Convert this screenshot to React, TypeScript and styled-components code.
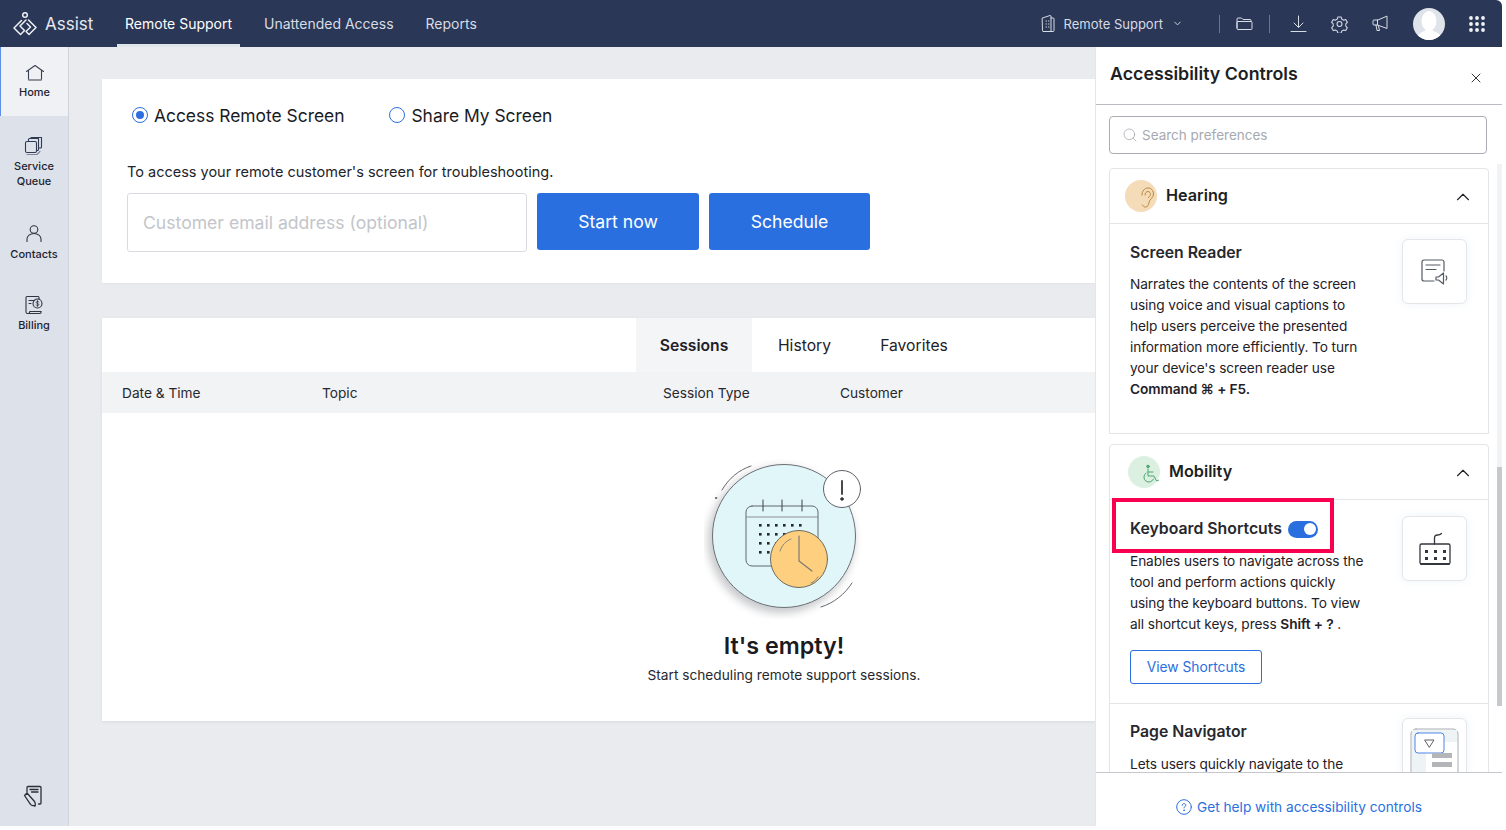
import { createGlobalStyle } from 'styled-components'
import styled from 'styled-components'
import { ChevronDown, ChevronUp, Search, X } from 'lucide-react'

const GlobalStyle = createGlobalStyle`
  html, body { margin: 0; padding: 0; height: 100%; background: #fff; }
  body { font-family: Inter, "Open Sans", "Liberation Sans", sans-serif; overflow: hidden; color: #1b1b1f; }
  * { box-sizing: border-box; }
`

const Page = styled.div`
  width: 1506px;
  height: 830px;
  display: flex;
  flex-direction: column;
  overflow: hidden;
`

// ---- top bar ----

const TopBar = styled.header`
  width: 1502px;
  height: 47px;
  flex: none;
  background: #2a3756;
  border-top-right-radius: 6px;
  display: flex;
  align-items: center;
  padding: 0 17px 0 12px;
  color: #e6e8ee;
`

const Logo = styled.div`
  display: flex;
  align-items: center;
  gap: 7px;
  width: 105px;
  font-size: 17px;
  color: #e4e7ed;
`

const TopNav = styled.nav`
  display: flex;
  height: 100%;
  gap: 16px;
`

const TopLink = styled.a<{ $active?: boolean }>`
  height: 100%;
  padding: 3px 8px 0;
  display: flex;
  align-items: center;
  font-size: 14px;
  color: ${({ $active }) => ($active ? '#fff' : '#d8dce5')};
  border-bottom: 3px solid ${({ $active }) => ($active ? '#dfe3ea' : 'transparent')};
`

const TopRight = styled.div`
  margin-left: auto;
  display: flex;
  align-items: center;
  color: #d8dce5;
`

const ProductPick = styled.div`
  display: flex;
  align-items: center;
  font-size: 13px;
  gap: 9px;
  margin-right: 20px;
`

const Divider = styled.span`
  width: 1px;
  height: 18px;
  background: #6b7590;
  margin: 0 16px;
`

const ToolSlot = styled.span<{ $left?: number }>`
  display: flex;
  margin-left: ${({ $left }) => $left ?? 0}px;
`

const Avatar = styled.div`
  width: 32px;
  height: 32px;
  border-radius: 50%;
  overflow: hidden;
  margin: 0 24px;
`

// ---- page body ----

const Body = styled.div`
  flex: 1;
  display: flex;
  min-height: 0;
  margin-bottom: 4px;
`

const Sidebar = styled.aside`
  width: 69px;
  flex: none;
  background: #dde1ea;
  border-right: 1px solid #cfd3da;
  display: flex;
  flex-direction: column;
`

const SideItem = styled.a<{ $active?: boolean; $height: number; $top: number }>`
  height: ${({ $height }) => $height}px;
  display: flex;
  flex-direction: column;
  align-items: center;
  padding-top: ${({ $top }) => $top}px;
  gap: 3px;
  font-size: 11px;
  line-height: 15px;
  font-weight: 500;
  text-align: center;
  color: #1d2430;
  background: ${({ $active }) => ($active ? '#eff1f4' : 'transparent')};
  border-left: ${({ $active }) => ($active ? '1px solid #5d8fe8' : '0')};
`

const SideFoot = styled.div`
  margin-top: auto;
  height: 41px;
  display: flex;
  justify-content: center;
  padding-right: 3px;
`

const Main = styled.main`
  width: 1026px;
  flex: none;
  background: #e9ebef;
  padding: 32px 0 0 33px;
  display: flex;
  flex-direction: column;
  overflow: hidden;
`

const StartCard = styled.section`
  background: #fff;
  height: 204px;
  padding: 24px 25px;
  box-shadow: 0 1px 2px rgba(30, 40, 60, 0.04);
`

const RadioRow = styled.div`
  display: flex;
  gap: 45px;
  padding-left: 5px;
  height: 24px;
  align-items: center;
`

const RadioLabel = styled.label`
  display: flex;
  align-items: center;
  gap: 6px;
  font-size: 17.4px;
  color: #1b1b1f;
`

const RadioDot = styled.span<{ $on?: boolean }>`
  width: 16px;
  height: 16px;
  border-radius: 50%;
  border: 1.5px solid #2d6fdf;
  display: flex;
  align-items: center;
  justify-content: center;
  &::after {
    content: '';
    width: 8px;
    height: 8px;
    border-radius: 50%;
    background: ${({ $on }) => ($on ? '#2d6fdf' : 'transparent')};
  }
`

const Hint = styled.p`
  margin: 35px 0 11px;
  font-size: 14.5px;
  line-height: 20px;
  color: #22242a;
`

const FormRow = styled.div`
  display: flex;
  gap: 10px;
  align-items: flex-start;
`

const EmailInput = styled.div`
  width: 400px;
  height: 59px;
  border: 1px solid #d9dbe0;
  border-radius: 3px;
  padding: 0 15px;
  display: flex;
  align-items: center;
  font-size: 17.6px;
  color: #c3c5ca;
`

const PrimaryButton = styled.button<{ $width: number }>`
  width: ${({ $width }) => $width}px;
  height: 57px;
  border: 0;
  border-radius: 3px;
  background: #2a6fe0;
  color: #fff;
  font: inherit;
  font-size: 17.6px;
`

const SessionsCard = styled.section`
  margin-top: 35px;
  background: #fff;
  height: 403px;
  box-shadow: 0 1px 3px rgba(30, 40, 60, 0.08);
  display: flex;
  flex-direction: column;
`

const TabRow = styled.div`
  height: 54px;
  display: flex;
  padding-left: 534px;
`

const Tab = styled.div<{ $active?: boolean; $width: number }>`
  width: ${({ $width }) => $width}px;
  display: flex;
  align-items: center;
  justify-content: center;
  font-size: 15.7px;
  font-weight: ${({ $active }) => ($active ? 600 : 400)};
  color: #1f2127;
  background: ${({ $active }) => ($active ? '#f4f5f7' : 'transparent')};
`

const HeadRow = styled.div`
  height: 41px;
  background: #f2f3f4;
  display: grid;
  grid-template-columns: 200px 341px 177px 1fr;
  padding-left: 20px;
  align-items: center;
  font-size: 13.7px;
  color: #26282e;
`

const Empty = styled.div`
  flex: 1;
  display: flex;
  flex-direction: column;
  align-items: center;
  padding-top: 46px;
  padding-left: 364px;
  width: 1000px;
`

const EmptyTitle = styled.h3`
  margin: 11px 0 0;
  font-size: 23.3px;
  line-height: 32px;
  font-weight: 600;
  color: #1b1b1f;
`

const EmptyText = styled.p`
  margin: 3px 0 0;
  font-size: 13.7px;
  line-height: 20px;
  color: #26282e;
`

// ---- accessibility panel ----

const Panel = styled.aside`
  width: 407px;
  flex: none;
  background: #fff;
  border-left: 1px solid #e4e6ea;
  display: flex;
  flex-direction: column;
  position: relative;
`

const PanelHead = styled.div`
  height: 58px;
  flex: none;
  border-bottom: 1px solid #b9bcc2;
  display: flex;
  align-items: flex-start;
  justify-content: space-between;
  padding: 15px 18px 0 14px;
  h2 {
    margin: 0;
    font-size: 17.8px;
    line-height: 24px;
    font-weight: 600;
    color: #1d1f24;
  }
  svg { margin-top: 8px; color: #25272c; }
`

const PanelScroll = styled.div`
  flex: 1;
  min-height: 0;
  overflow: hidden;
  padding: 11px 0 0 13px;
`

const SearchBox = styled.div`
  height: 38px;
  width: 378px;
  border: 1px solid #a9acb3;
  border-radius: 4px;
  display: flex;
  align-items: center;
  gap: 4px;
  padding: 0 12px;
  font-size: 13.5px;
  color: #a6a9b0;
`

const Group = styled.section<{ $height?: number }>`
  margin-top: 14px;
  width: 380px;
  border: 1px solid #e3e5e9;
  border-radius: 4px 4px 0 0;
  ${({ $height }) => ($height ? `height: ${$height}px;` : '')}
  & + & { margin-top: 10px; }
`

const GroupHead = styled.div<{ $pad: number }>`
  height: 55px;
  display: flex;
  align-items: center;
  gap: 9px;
  padding: 0 14px 2px ${({ $pad }) => $pad}px;
  border-bottom: 1px solid #e3e5e9;
  font-size: 16.2px;
  font-weight: 600;
  color: #1d1f24;
  svg:last-child { margin-left: auto; margin-top: 3px; }
`

const GroupBadge = styled.span<{ $bg: string }>`
  width: 32px;
  height: 32px;
  margin-top: 2px;
  border-radius: 50%;
  background: ${({ $bg }) => $bg};
  display: flex;
  align-items: center;
  justify-content: center;
`

const Pref = styled.div<{ $height: number; $top: number; $line?: boolean }>`
  height: ${({ $height }) => $height}px;
  display: grid;
  grid-template-columns: 1fr 65px;
  column-gap: 30px;
  padding: ${({ $top }) => $top}px 21px 0 20px;
  border-bottom: ${({ $line }) => ($line ? '1px solid #e3e5e9' : '0')};
`

const PrefTitle = styled.h4<{ $above: number; $below: number }>`
  margin: ${({ $above }) => $above}px 0 ${({ $below }) => $below}px;
  font-size: 15.8px;
  line-height: 24px;
  font-weight: 600;
  color: #26282d;
  display: flex;
  align-items: center;
  gap: 6px;
`

const PrefText = styled.p`
  margin: 0;
  font-size: 13.7px;
  line-height: 21px;
  letter-spacing: -0.1px;
  color: #1f2127;
  b { font-weight: 600; }
`

const Highlight = styled.div`
  position: absolute;
  left: 16px;
  top: 451px;
  width: 222px;
  height: 55px;
  border: 4px solid #f8004f;
  pointer-events: none;
`

const Toggle = styled.span`
  width: 30px;
  height: 17px;
  border-radius: 9px;
  background: #2a6fe0;
  display: flex;
  align-items: center;
  justify-content: flex-end;
  padding-right: 2px;
  &::after {
    content: '';
    width: 12px;
    height: 12px;
    border-radius: 50%;
    background: #fff;
  }
`

const IconTile = styled.div`
  width: 65px;
  height: 65px;
  border: 1px solid #e4e6ea;
  border-radius: 6px;
  background: #fff;
  box-shadow: 0 0 8px rgba(200, 215, 230, 0.3);
  display: flex;
  align-items: center;
  justify-content: center;
`

const OutlineButton = styled.button`
  margin-top: 15px;
  width: 132px;
  height: 34px;
  background: #fff;
  border: 1px solid #2a6fe0;
  border-radius: 3px;
  color: #2a6fe0;
  font: inherit;
  font-size: 13.8px;
`

const ScrollTrack = styled.div`
  position: absolute;
  right: 0;
  top: 117px;
  width: 5px;
  height: 541px;
  background: #f1f2f3;
`

const ScrollThumb = styled.div`
  position: absolute;
  right: 0;
  top: 420px;
  width: 5px;
  height: 239px;
  background: #c6c8cc;
`

const PanelFoot = styled.div`
  height: 54px;
  flex: none;
  border-top: 1px solid #c5c7cc;
  display: flex;
  align-items: center;
  justify-content: center;
  gap: 5px;
  padding-top: 14px;
  font-size: 13.7px;
  color: #2a6fe0;
`

const strokeIcon = { fill: 'none', stroke: 'currentColor', strokeLinecap: 'round', strokeLinejoin: 'round' } as const

function LogoMark() {
  return (
    <svg width="26" height="26" viewBox="0 0 26 26" {...strokeIcon} stroke="#eef0f4" strokeWidth="1.5">
      <circle cx="13" cy="4" r="2.3" />
      <path d="M9.5 9.5 2 17l6.5 6.5 4-4L8 15l6-6" />
      <path d="M16.5 9 24 16.5 17 23.5l-3-3 4.5-4.5-3.5-3.5" />
    </svg>
  )
}

function HomeIcon() {
  return (
    <svg width="20" height="18" viewBox="0 0 20 18" {...strokeIcon} stroke="#39404f" strokeWidth="1.1">
      <path d="M1.5 7.5 10 1.5l8.5 6" />
      <path d="M3.5 6.5V15a1 1 0 0 0 1 1h11a1 1 0 0 0 1-1V6.5" />
      <path d="M4 16h12" stroke="#8d93a0" strokeWidth="1.5" />
    </svg>
  )
}

function QueueIcon() {
  return (
    <svg width="20" height="20" viewBox="0 0 20 20" {...strokeIcon} stroke="#2f3a52" strokeWidth="1.1">
      <rect x="1.5" y="5.5" width="11" height="11" rx="1.5" />
      <path d="M4.5 5.5V3.5a1 1 0 0 1 1-1h9v11a1 1 0 0 1-1 1h-1" />
      <path d="M7 2.500V1.500h10.500V11a1 1 0 0 1-1 1h-2" />
      <path d="M3 18.500h10l3-3" stroke="#7d8596" />
    </svg>
  )
}

function ContactIcon() {
  return (
    <svg width="18" height="20" viewBox="0 0 18 20" {...strokeIcon} stroke="#2f3542" strokeWidth="1.1">
      <circle cx="9" cy="5.5" r="3.8" />
      <path d="M2 17.5V15c0-3 3-5.5 7-5.500s7 2.500 7 5.500v2.500" />
    </svg>
  )
}

function BillingIcon() {
  return (
    <svg width="20" height="20" viewBox="0 0 20 20" {...strokeIcon} stroke="#2f3542" strokeWidth="1.1">
      <path d="M15 4V2.5a1 1 0 0 0-1-1H3a1 1 0 0 0-1 1V17a1.500 1.500 0 0 0 1.500 1.500H15" />
      <path d="M5 5.500h5M5 8.500h2" />
      <circle cx="13.5" cy="8.5" r="4.5" />
      <path d="M15 7c-.5-.7-2.700-.9-2.900.4-.2 1.400 3 .8 2.800 2.300-.2 1.200-2.500 1-3 .2M13.500 5.500v6" strokeWidth="0.8" />
      <path d="M4.500 18.500c1 0 1.200-.8 1.200-2h11.500c0 1.300-.6 2-1.700 2" />
    </svg>
  )
}

function NoteIcon() {
  return (
    <svg width="20" height="22" viewBox="0 0 20 22" {...strokeIcon} stroke="#2a2f3a" strokeWidth="1.3">
      <path d="M4 7V2.500a1 1 0 0 1 1-1h12a1 1 0 0 1 1 1V18a1 1 0 0 1-1 1h-1.500" />
      <path d="M7 4.500h8M8.500 7h6.500" />
      <path d="M1.500 10.500 4 8l7.500 8.500c.7.800.8 1.500.8 3l-.3 1.500-1.800-.3c-1.200-.2-2.100-.7-2.700-1.400z" />
    </svg>
  )
}

function PhoneDocIcon() {
  return (
    <svg width="14" height="19" viewBox="0 0 14 19" {...strokeIcon} stroke="#d8dce5" strokeWidth="1">
      <path d="M1.500 4 9 1.500a1 1 0 0 1 1 .5v15.500H2a.5.500 0 0 1-.5-.5z" />
      <path d="M10 4h2a1 1 0 0 1 1 1v11.500a1 1 0 0 1-1 1h-2" />
      <path d="M5 7h.5M7.500 7H8M5 10h.5M7.500 10H8M5 13h.5M7.500 13H8" />
    </svg>
  )
}

function FolderIcon() {
  return (
    <svg width="17" height="14" viewBox="0 0 17 14" {...strokeIcon} stroke="#d8dce5" strokeWidth="1">
      <path d="M1 11V2a1 1 0 0 1 1-1h3.500L7 2.500h7a1 1 0 0 1 1 1v1" />
      <rect x="1" y="4.5" width="15" height="8" rx="1" />
    </svg>
  )
}

function DownloadIcon() {
  return (
    <svg width="17" height="18" viewBox="0 0 17 18" {...strokeIcon} stroke="#d8dce5" strokeWidth="1">
      <path d="M8.500 1v11M4 8l4.500 4.500L13 8M1 16.500h15" />
    </svg>
  )
}

function GearIcon() {
  return (
    <svg width="17" height="18" viewBox="0 0 24 24" {...strokeIcon} stroke="#d8dce5" strokeWidth="1.5">
      <circle cx="12" cy="12" r="3.5" />
      <path d="M9.700 2h4.600l.8 3 2.700 1.600 3-.9 2.300 4-2.200 2.200v3.200l2.200 2.200-2.300 4-3-.9-2.700 1.600-.8 3H9.700l-.8-3-2.700-1.600-3 .9-2.300-4 2.200-2.200v-3.200L.9 9.700l2.300-4 3 .9L8.900 5z" />
    </svg>
  )
}

function MegaphoneIcon() {
  return (
    <svg width="17" height="17" viewBox="0 0 17 17" {...strokeIcon} stroke="#d8dce5" strokeWidth="1">
      <path d="M15 1.500v12L5.500 10H2a1 1 0 0 1-1-1V6a1 1 0 0 1 1-1h3.500z" />
      <path d="M5.500 5v5M4 10l1 5.500h2.500L6.500 11" />
    </svg>
  )
}

function AvatarArt() {
  return (
    <svg width="32" height="32" viewBox="0 0 32 32">
      <rect width="32" height="32" fill="#dfe3ea" />
      <ellipse cx="16" cy="13" rx="7.5" ry="10" fill="#fff" />
      <path d="M3 32c1-7 7-8 10-10h6c3 2 9 3 10 10z" fill="#fff" />
    </svg>
  )
}

function AppsIcon() {
  const dots = [2, 8, 14].flatMap(y => [2, 8, 14].map(x => ({ x, y })))
  return (
    <svg width="16" height="16" viewBox="0 0 16 16" fill="#f1f3f6">
      {dots.map(d => <circle key={`${d.x}-${d.y}`} cx={d.x} cy={d.y} r="1.9" />)}
    </svg>
  )
}

function EarIcon() {
  return (
    <svg width="18" height="24" viewBox="1 0 18 24" {...strokeIcon} stroke="#b9843f" strokeWidth="1">
      <path d="M4 9c0-4 2.500-7 6-7s5.500 3 5.500 6c0 4-4 5-4.500 8.500-.4 2.500-1.500 4.500-3.500 4.500-1.500 0-2.500-1-3-2" />
      <path d="M7 9c0-2 1.300-3.500 3-3.500s2.500 1.500 2.500 3c0 1.500-1.500 2-2 3" />
    </svg>
  )
}

function WheelchairIcon() {
  return (
    <svg width="18" height="20" viewBox="0 0 18 20" {...strokeIcon} stroke="#4fa56f" strokeWidth="1">
      <circle cx="6" cy="2.5" r="1.3" fill="#4fa56f" />
      <path d="M6 5v7h6l2.500 5 2-.7" />
      <path d="M6 8h5" />
      <path d="M4 9a5 5 0 1 0 7.500 6" />
    </svg>
  )
}

function ReaderIcon() {
  return (
    <svg width="28" height="26" viewBox="0 0 28 26" {...strokeIcon} stroke="#555a63" strokeWidth="1.2">
      <path d="M23 12V3a2 2 0 0 0-2-2H3a2 2 0 0 0-2 2v17a2 2 0 0 0 2 2h10" />
      <path d="M5 6h14M5 10.500h10" />
      <path d="M15 18h2.500l5-4v11l-5-4H15z" />
      <path d="M25 17c1 1 1 3 0 4" />
    </svg>
  )
}

function KeyboardIcon() {
  const keys = [18, 25].flatMap(y => [6, 15, 24].map(x => ({ x, y })))
  return (
    <svg width="32" height="33" viewBox="0 0 32 33" {...strokeIcon} stroke="#33363c" strokeWidth="1.3">
      <path d="M15.500 12V6c0-2 1-3 3-3 2 0 3-.5 4-1.500" />
      <rect x="1" y="12" width="30" height="20" rx="1.500" />
      <path d="M2 32h28" strokeWidth="1.800" />
      {keys.map(k => <rect key={`${k.x}-${k.y}`} x={k.x} y={k.y} width="3" height="3" fill="#33363c" stroke="none" />)}
    </svg>
  )
}

function NavigatorIcon() {
  return (
    <svg width="50" height="46" viewBox="0 0 50 46" {...strokeIcon}>
      <rect x="1" y="1" width="47" height="60" rx="5" fill="#fff" stroke="#a9acb3" />
      <rect x="2" y="2" width="14" height="58" fill="#eef3f6" stroke="none" />
      <rect x="2" y="2" width="45" height="12" fill="#eef3f6" stroke="none" />
      <rect x="5" y="5" width="29" height="20" rx="3" fill="#fff" stroke="#4f86e6" />
      <path d="M15 12h9l-4.500 7z" stroke="#5d6068" />
      <rect x="22" y="25" width="20" height="5" fill="#b3b5b9" stroke="none" />
      <rect x="22" y="34" width="20" height="5" fill="#b3b5b9" stroke="none" />
    </svg>
  )
}

function HelpIcon() {
  return (
    <svg width="16" height="16" viewBox="0 0 16 16" {...strokeIcon} stroke="#2a6fe0" strokeWidth="1">
      <circle cx="8" cy="8" r="7.300" />
      <path d="M6.200 6.300c0-1 .8-1.700 1.800-1.700s1.800.7 1.800 1.600c0 1.300-1.800 1.400-1.800 2.800" />
      <circle cx="8" cy="11.300" r=".4" fill="#2a6fe0" />
    </svg>
  )
}

function EmptyArt() {
  const dots = [0, 1, 2, 3].flatMap(r => [0, 1, 2, 3, 4, 5].map(c => ({ r, c })))
  return (
    <svg width="160" height="160" viewBox="-2 1 160 160" {...strokeIcon}>
      <defs>
        <filter id="blur-shadow" x="-20%" y="-20%" width="140%" height="140%">
          <feGaussianBlur stdDeviation="4" />
        </filter>
      </defs>
      <circle cx="75" cy="82" r="72" fill="#9a9da3" opacity="0.55" filter="url(#blur-shadow)" />
      <circle cx="78" cy="78" r="71.5" fill="#e1f6f9" stroke="#6d7075" strokeWidth="1" />
      <path d="M45 8C33 12 23 20 16 32" stroke="#66696e" />
      <circle cx="10" cy="40" r=".7" fill="#66696e" stroke="#66696e" />
      <path d="M146 125c-7 11-18 20-31 24" stroke="#66696e" />
      <rect x="40" y="48" width="72" height="60" rx="6" fill="#e1f6f9" stroke="#63666b" />
      <path d="M40 59h72" stroke="#8d9095" />
      <path d="M57 42v11M76 42v11M96 42v11" stroke="#3d4046" />
      {dots.map(({ r, c }) => (
        <rect key={`${r}-${c}`} x={53 + c * 8} y={66 + r * 9} width="2.600" height="2.600" fill="#26282d" stroke="none" />
      ))}
      <circle cx="93" cy="101" r="28.5" fill="#fdcf7f" stroke="#6d6a60" />
      <path d="M93 78v25l13 10" stroke="#7d7970" strokeWidth="1.2" />
      <path d="M74 93c2-6 6-10 11-12M105 125c3-1 5-3 7-6" stroke="#8a8478" />
      <circle cx="136" cy="31" r="18.5" fill="#fff" stroke="#5f6267" />
      <path d="M136 23v13" stroke="#33363c" strokeWidth="1.8" />
      <circle cx="136" cy="41" r="1.3" fill="#33363c" stroke="#33363c" />
    </svg>
  )
}

export default function App() {
  return (
    <Page>
      <GlobalStyle />
      <TopBar>
        <Logo><LogoMark />Assist</Logo>
        <TopNav>
          <TopLink $active>Remote Support</TopLink>
          <TopLink>Unattended Access</TopLink>
          <TopLink>Reports</TopLink>
        </TopNav>
        <TopRight>
          <ProductPick>
            <PhoneDocIcon />
            <span>Remote Support</span>
            <ChevronDown size={11} />
          </ProductPick>
          <Divider />
          <FolderIcon />
          <Divider />
          <ToolSlot $left={4}><DownloadIcon /></ToolSlot>
          <ToolSlot $left={24}><GearIcon /></ToolSlot>
          <ToolSlot $left={24}><MegaphoneIcon /></ToolSlot>
          <Avatar><AvatarArt /></Avatar>
          <AppsIcon />
        </TopRight>
      </TopBar>

      <Body>
        <Sidebar>
          <SideItem $active $height={69} $top={17}><HomeIcon />Home</SideItem>
          <SideItem $height={90} $top={20}><QueueIcon />Service<br />Queue</SideItem>
          <SideItem $height={71} $top={18}><ContactIcon />Contacts</SideItem>
          <SideItem $height={71} $top={18}><BillingIcon />Billing</SideItem>
          <SideFoot><NoteIcon /></SideFoot>
        </Sidebar>

        <Main>
          <StartCard>
            <RadioRow>
              <RadioLabel><RadioDot $on />Access Remote Screen</RadioLabel>
              <RadioLabel><RadioDot />Share My Screen</RadioLabel>
            </RadioRow>
            <Hint>To access your remote customer's screen for troubleshooting.</Hint>
            <FormRow>
              <EmailInput>Customer email address (optional)</EmailInput>
              <PrimaryButton $width={162}>Start now</PrimaryButton>
              <PrimaryButton $width={161}>Schedule</PrimaryButton>
            </FormRow>
          </StartCard>

          <SessionsCard>
            <TabRow>
              <Tab $active $width={116}>Sessions</Tab>
              <Tab $width={105}>History</Tab>
              <Tab $width={114}>Favorites</Tab>
            </TabRow>
            <HeadRow>
              <span>Date &amp; Time</span>
              <span>Topic</span>
              <span>Session Type</span>
              <span>Customer</span>
            </HeadRow>
            <Empty>
              <EmptyArt />
              <EmptyTitle>It's empty!</EmptyTitle>
              <EmptyText>Start scheduling remote support sessions.</EmptyText>
            </Empty>
          </SessionsCard>
        </Main>

        <Panel>
          <PanelHead>
            <h2>Accessibility Controls</h2>
            <X size={16} strokeWidth={1.4} />
          </PanelHead>
          <PanelScroll>
            <SearchBox><Search size={16} strokeWidth={1.2} />Search preferences</SearchBox>
            <Group $height={266}>
              <GroupHead $pad={15}>
                <GroupBadge $bg="#f4dcb8"><EarIcon /></GroupBadge>
                Hearing
                <ChevronUp size={22} strokeWidth={1.2} />
              </GroupHead>
              <Pref $height={209} $top={15}>
                <div>
                  <PrefTitle $above={2} $below={9}>Screen Reader</PrefTitle>
                  <PrefText>
                    Narrates the contents of the screen using voice and visual captions to help users
                    perceive the presented information more efficiently. To turn your device's screen
                    reader use <b>Command ⌘ + F5.</b>
                  </PrefText>
                </div>
                <IconTile><ReaderIcon /></IconTile>
              </Pref>
            </Group>
            <Group>
              <GroupHead $pad={18}>
                <GroupBadge $bg="#dcf0e2"><WheelchairIcon /></GroupBadge>
                Mobility
                <ChevronUp size={22} strokeWidth={1.2} />
              </GroupHead>
              <Pref $height={204} $top={16} $line>
                <div>
                  <PrefTitle $above={1} $below={10}>Keyboard Shortcuts <Toggle /></PrefTitle>
                  <PrefText>
                    Enables users to navigate across the tool and perform actions quickly using the
                    keyboard buttons. To view all shortcut keys, press <b>Shift + ?</b> .
                  </PrefText>
                  <OutlineButton>View Shortcuts</OutlineButton>
                </div>
                <IconTile><KeyboardIcon /></IconTile>
              </Pref>
              <Pref $height={120} $top={14}>
                <div>
                  <PrefTitle $above={2} $below={10}>Page Navigator</PrefTitle>
                  <PrefText>Lets users quickly navigate to the</PrefText>
                </div>
                <IconTile><NavigatorIcon /></IconTile>
              </Pref>
            </Group>
          </PanelScroll>
          <Highlight />
          <ScrollTrack />
          <ScrollThumb />
          <PanelFoot><HelpIcon />Get help with accessibility controls</PanelFoot>
        </Panel>
      </Body>
    </Page>
  )
}
